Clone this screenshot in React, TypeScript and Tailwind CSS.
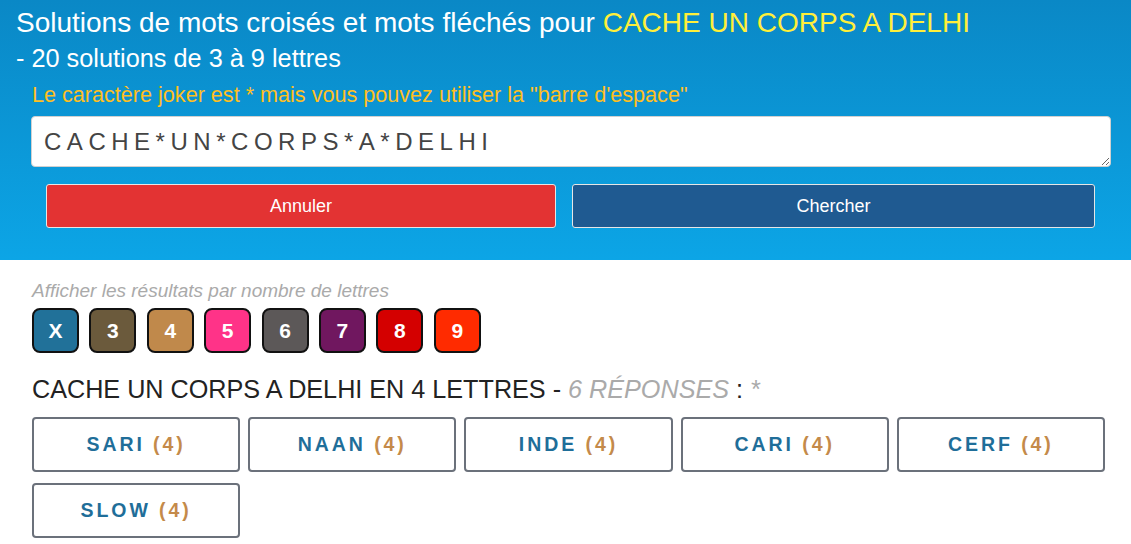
const badges = [
  { label: 'X', bg: 'bg-[#217199]' },
  { label: '3', bg: 'bg-[#6b5a3c]' },
  { label: '4', bg: 'bg-[#c0894b]' },
  { label: '5', bg: 'bg-[#ff3388]' },
  { label: '6', bg: 'bg-[#5c5858]' },
  { label: '7', bg: 'bg-[#70175f]' },
  { label: '8', bg: 'bg-[#d40000]' },
  { label: '9', bg: 'bg-[#ff2b00]' },
];

const words = ['SARI', 'NAAN', 'INDE', 'CARI', 'CERF', 'SLOW'];

export default function App() {
  return (
    <div className="min-h-screen bg-white font-['Liberation_Sans',Arial,sans-serif]">
      <div className="h-[260px] bg-gradient-to-b from-[#0a88c6] to-[#0ca5e6] pl-4 pr-5 pt-[5px]">
        <h1 className="whitespace-nowrap text-[28px] leading-[36px] text-white">
          Solutions de mots croisés et mots fléchés pour{' '}
          <span className="text-[#ffef3a]">CACHE UN CORPS A DELHI</span>
        </h1>
        <p className="text-[25.3px] leading-[34px] text-white">- 20 solutions de 3 à 9 lettres</p>
        <p className="ml-4 mt-[7px] whitespace-nowrap text-[21.6px] leading-[26px] text-[#ffbf1f]">
          Le caractère joker est * mais vous pouvez utiliser la "barre d'espace"
        </p>
        <textarea
          className="ml-[15px] mt-[8px] block h-[51px] w-[calc(100%-15px)] resize-y rounded-[4px] border border-[#d0d0d0] bg-white px-3 pt-[11px] text-[24px] leading-[28px] tracking-[0.23em] text-[#444] outline-none"
          defaultValue="CACHE*UN*CORPS*A*DELHI"
        />
        <div className="ml-[30px] mt-[17px] grid grid-cols-[510px_523px] gap-4">
          <button className="h-[44px] rounded-[3px] border border-[#e6e6e6] bg-[#e33333] text-[18px] text-white">
            Annuler
          </button>
          <button className="h-[44px] rounded-[3px] border border-[#e6e6e6] bg-[#1f5a91] text-[18px] text-white">
            Chercher
          </button>
        </div>
      </div>

      <div className="px-8 pt-[20px]">
        <p className="text-[19px] italic leading-[22px] text-[#aaaaaa]">
          Afficher les résultats par nombre de lettres
        </p>
        <div className="mt-[6px] flex gap-[10.4px]">
          {badges.map((b) => (
            <button
              key={b.label}
              className={`flex h-[45px] w-[47px] items-center justify-center rounded-[8px] border-2 border-[#111] ${b.bg} text-[21px] font-bold text-white`}
            >
              {b.label}
            </button>
          ))}
        </div>
        <h2 className="mt-[21px] whitespace-nowrap text-[25.2px] leading-[30px] text-[#222]">
          CACHE UN CORPS A DELHI EN 4 LETTRES -{' '}
          <span className="italic text-[#aaaaaa]">6 RÉPONSES</span> :{' '}
          <span className="italic text-[#aaaaaa]">*</span>
        </h2>
        <div className="mt-[13px] grid w-[1073px] grid-cols-5 gap-x-2 gap-y-[11px]">
          {words.map((w) => (
            <button
              key={w}
              className="h-[55px] rounded-[4px] border-2 border-[#6b717b] bg-white text-[19.5px] font-bold tracking-[0.15em] text-[#1f6e99]"
            >
              {w} <span className="text-[#c48a4a]">(4)</span>
            </button>
          ))}
        </div>
      </div>
    </div>
  );
}
